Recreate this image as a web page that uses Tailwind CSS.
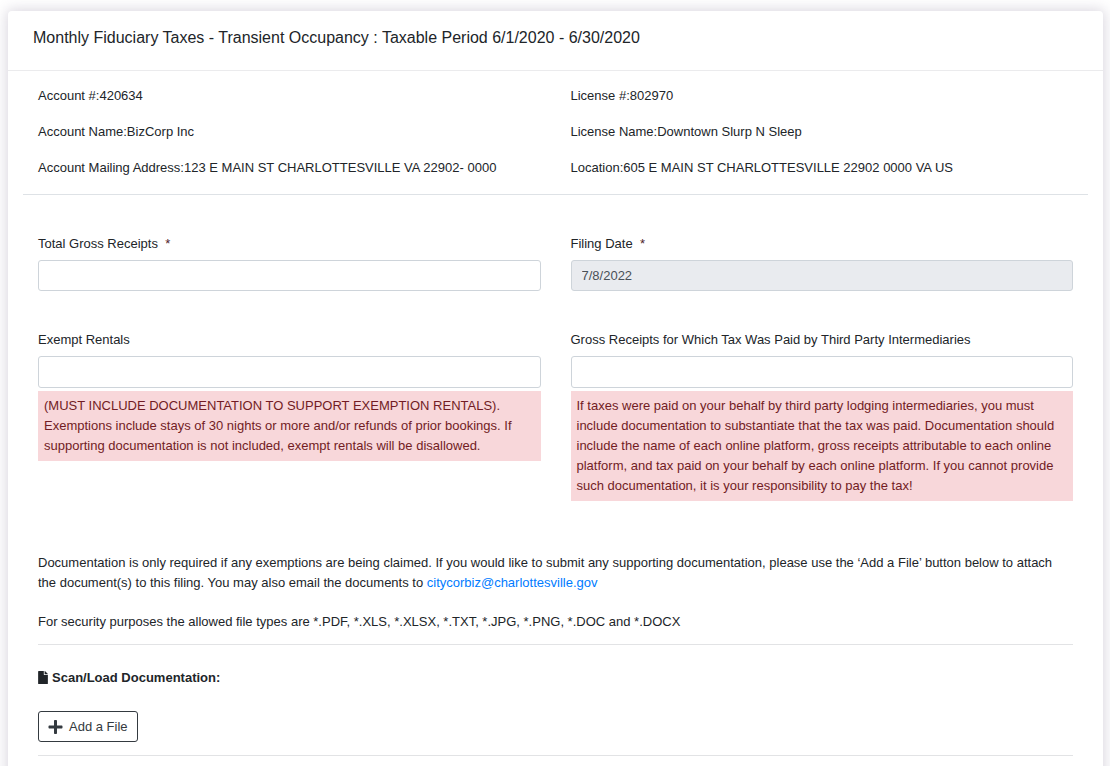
<!DOCTYPE html>
<html lang="en">
<head>
  <meta charset="UTF-8" />
  <meta name="viewport" content="width=device-width, initial-scale=1" />
  <title>Monthly Fiduciary Taxes</title>
  <script src="https://cdn.jsdelivr.net/npm/@tailwindcss/browser@4"></script>
</head>
<body class="bg-white font-['Liberation_Sans',Arial,sans-serif] text-[13px] leading-5 text-[#212529] overflow-x-hidden">

  <main class="mt-[11px] ml-2 mr-[7px] bg-white rounded-t shadow-[0_0_13px_2px_rgba(82,63,105,0.2)]">

    <!-- Card header -->
    <header class="px-[25px] pt-[15px] pb-5 border-b border-[#ebebed]">
      <h1 class="text-base leading-6">Monthly Fiduciary Taxes - Transient Occupancy : Taxable Period 6/1/2020 - 6/30/2020</h1>
    </header>

    <div class="px-[15px]">

      <!-- Account / license details -->
      <section class="grid grid-cols-2 gap-x-[30px] px-[15px] pt-[15px] pb-4 border-b border-[#dee2e6]">
        <div class="space-y-4">
          <p>Account #:420634</p>
          <p>Account Name:BizCorp Inc</p>
          <p>Account Mailing Address:123 E MAIN ST CHARLOTTESVILLE VA 22902- 0000</p>
        </div>
        <div class="space-y-4">
          <p>License #:802970</p>
          <p>License Name:Downtown Slurp N Sleep</p>
          <p>Location:605 E MAIN ST CHARLOTTESVILLE 22902 0000 VA US</p>
        </div>
      </section>

      <form class="px-[15px] pt-[39px] pb-10">

        <!-- Fields -->
        <div class="grid grid-cols-2 gap-x-[30px] gap-y-[39px]">
          <div>
            <label for="grossReceipts" class="block mb-[6px]">Total Gross Receipts&nbsp; <span class="text-[#4d2127]">*</span></label>
            <input type="text" id="grossReceipts" required
              class="block w-full h-[31px] px-[10px] border border-[#ced4da] rounded-[3px] bg-white" />
          </div>

          <div>
            <label for="filingDate" class="block mb-[6px]">Filing Date&nbsp; <span class="text-[#4d2127]">*</span></label>
            <input type="text" id="filingDate" value="7/8/2022" readonly
              class="block w-full h-[31px] px-[10px] border border-[#ced4da] rounded-[3px] bg-[#e9ebef] text-[#495057]" />
          </div>

          <div>
            <label for="exemptRentals" class="block mb-[6px]">Exempt Rentals</label>
            <input type="text" id="exemptRentals"
              class="block w-full h-8 px-[10px] border border-[#ced4da] rounded-[3px] bg-white" />
            <p class="mt-[3px] px-[6px] py-[5px] bg-[#f8d7da] text-[#721c24]">(MUST INCLUDE DOCUMENTATION TO SUPPORT EXEMPTION RENTALS). Exemptions include stays of 30 nights or more and/or refunds of prior bookings. If supporting documentation is not included, exempt rentals will be disallowed.</p>
          </div>

          <div>
            <label for="thirdParty" class="block mb-[6px]">Gross Receipts for Which Tax Was Paid by Third Party Intermediaries</label>
            <input type="text" id="thirdParty"
              class="block w-full h-8 px-[10px] border border-[#ced4da] rounded-[3px] bg-white" />
            <p class="mt-[3px] px-[6px] py-[5px] bg-[#f8d7da] text-[#721c24]">If taxes were paid on your behalf by third party lodging intermediaries, you must include documentation to substantiate that the tax was paid. Documentation should include the name of each online platform, gross receipts attributable to each online platform, and tax paid on your behalf by each online platform. If you cannot provide such documentation, it is your responsibility to pay the tax!</p>
          </div>
        </div>

        <!-- Instructions -->
        <div class="mt-[52px] pb-3 border-b border-[#e2e3e5]">
          <p>Documentation is only required if any exemptions are being claimed. If you would like to submit any supporting documentation, please use the ‘Add a File’ button below to attach the document(s) to this filing. You may also email the documents to <a href="mailto:citycorbiz@charlottesville.gov" class="text-[#007bff]">citycorbiz@charlottesville.gov</a></p>
          <p class="mt-[19px]">For security purposes the allowed file types are *.PDF, *.XLS, *.XLSX, *.TXT, *.JPG, *.PNG, *.DOC and *.DOCX</p>
        </div>

        <!-- Upload -->
        <div class="pt-[23px] pb-[13px] border-b border-[#e2e3e5]">
          <h2 class="flex items-center gap-1 font-bold">
            <svg class="w-[10px] h-[13px] mb-[2px]" viewBox="0 0 384 512" fill="currentColor" aria-hidden="true">
              <path d="M224 136V0H24C10.700 0 0 10.700 0 24v464c0 13.300 10.700 24 24 24h336c13.300 0 24-10.700 24-24V160H248c-13.200 0-24-10.800-24-24zm160-14.100v6.100H256V0h6.100c6.400 0 12.500 2.500 17 7l97.900 98c4.500 4.500 7 10.600 7 16.900z" />
            </svg>
            Scan/Load Documentation:
          </h2>
          <button type="button" class="mt-[23px] flex items-center gap-[6px] h-[31px] px-[9px] border border-[#343a40] rounded-[3px] text-[#343a40]">
            <svg class="w-[15px] h-[16px]" viewBox="0 0 448 512" fill="currentColor" aria-hidden="true">
              <path d="M416 208H272V64c0-17.670-14.330-32-32-32h-32c-17.670 0-32 14.330-32 32v144H32c-17.670 0-32 14.330-32 32v32c0 17.670 14.330 32 32 32h144v144c0 17.670 14.330 32 32 32h32c17.670 0 32-14.330 32-32V304h144c17.670 0 32-14.330 32-32v-32c0-17.670-14.330-32-32-32z" />
            </svg>
            Add a File
          </button>
        </div>

      </form>
    </div>
  </main>

</body>
</html>
